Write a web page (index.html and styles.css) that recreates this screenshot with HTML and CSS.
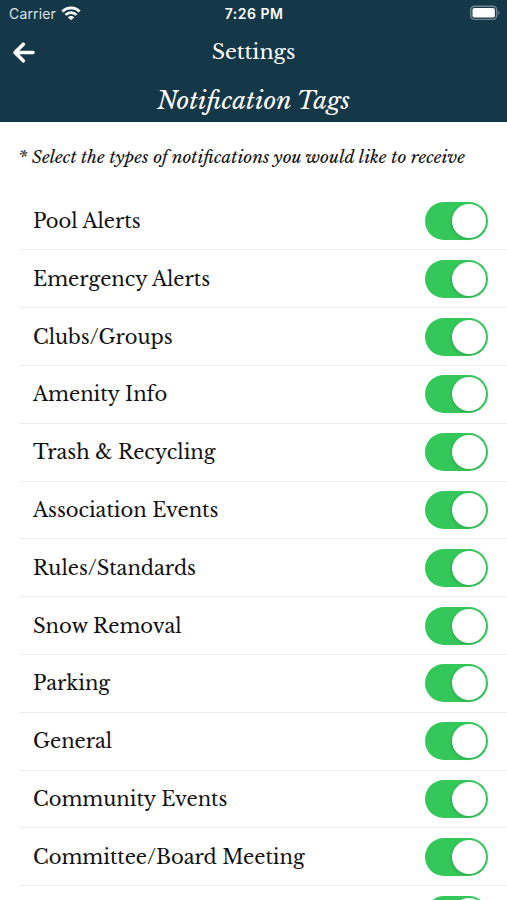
FILE: index.html
```html
<!DOCTYPE html>
<html lang="en">
<head>
<meta charset="utf-8">
<title>Settings</title>
<link rel="stylesheet" href="styles.css">
</head>
<body>
<header class="header">
  <div class="status">
    <div class="carrier"><span>Carrier</span>
      <svg class="wifi" width="20" height="15" viewBox="0 0 20 15" fill="none" stroke="#fff" stroke-width="2.7"><path d="M1.3 5.4C6.2.8 13.8.8 18.700 5.400M4.500 8.900C7.600 5.900 12.400 5.900 15.500 8.900"/><path d="M10 14.300L6.900 11.200C8.700 9.600 11.300 9.600 13.100 11.200Z" fill="#fff" stroke="none"/></svg>
    </div>
    <time class="clock">7:26 PM</time>
    <svg class="battery" width="32" height="16" viewBox="0 0 32 16"><rect x="1.700" y="1.200" width="26" height="13.200" rx="3.800" fill="none" stroke="#70858f" stroke-width="1.400"/><rect x="3.500" y="3" width="22.400" height="9.600" rx="1.800" fill="#fff"/><path d="M29.300 5.500Q32 7.800 29.300 10.100Z" fill="#70858f"/></svg>
  </div>
  <nav class="nav">
    <svg class="back" width="24" height="24" viewBox="0 0 24 24" fill="none" stroke="#fff" stroke-width="3.600" stroke-linecap="round" stroke-linejoin="round"><path d="M12.300 4.200L4 12.500L12.300 20.800M4.500 12.500H22"/></svg>
    <h1 class="title">Settings</h1>
  </nav>
  <h2 class="subtitle">Notification Tags</h2>
</header>
<main>
  <p class="hint">* Select the types of notifications you would like to receive</p>
  <ul class="tags">
    <li class="tag"><span>Pool Alerts</span><i class="toggle"></i></li>
    <li class="tag"><span>Emergency Alerts</span><i class="toggle"></i></li>
    <li class="tag"><span>Clubs/Groups</span><i class="toggle"></i></li>
    <li class="tag"><span>Amenity Info</span><i class="toggle"></i></li>
    <li class="tag"><span>Trash &amp; Recycling</span><i class="toggle"></i></li>
    <li class="tag"><span>Association Events</span><i class="toggle"></i></li>
    <li class="tag"><span>Rules/Standards</span><i class="toggle"></i></li>
    <li class="tag"><span>Snow Removal</span><i class="toggle"></i></li>
    <li class="tag"><span>Parking</span><i class="toggle"></i></li>
    <li class="tag"><span>General</span><i class="toggle"></i></li>
    <li class="tag"><span>Community Events</span><i class="toggle"></i></li>
    <li class="tag"><span>Committee/Board Meeting</span><i class="toggle"></i></li>
    <li class="tag"><span></span><i class="toggle"></i></li>
  </ul>
</main>
</body>
</html>
```
FILE: styles.css
```css
* { box-sizing: border-box; }
html, body { height: 100%; }
body {
  margin: 0;
  overflow: hidden;
  background: #fff;
  color: #111;
  font-family: "Libre Baskerville", "Liberation Serif", serif;
}
.header { height: 122px; background: #153848; color: #fff; }
.status {
  display: grid;
  grid-template-columns: 1fr auto 1fr;
  align-items: center;
  height: 27px;
  padding: 0 6px 0 9px;
  font-family: Inter, "Liberation Sans", sans-serif;
}
.carrier { display: flex; align-items: center; gap: 5px; font-size: 14px; letter-spacing: 0.15px; color: #dce3e6; }
.wifi { margin-top: -1px; }
.clock { font-size: 14px; font-weight: 600; letter-spacing: 0.5px; margin-right: 2px; }
.battery { justify-self: end; margin-top: -1px; }
.nav { display: grid; grid-template-columns: 40px 1fr 40px; align-items: center; height: 50px; padding: 0 11px; }
.title { margin: 0; text-align: center; font-size: 20.6px; font-weight: 400; line-height: 28px; }
.subtitle { margin: 0; text-align: center; font-size: 24.4px; font-style: italic; font-weight: 400; line-height: 47px; }
.hint { margin: 0; height: 70.6px; padding: 0 0 0 18px; line-height: 70px; font-size: 17.1px; font-style: italic; white-space: nowrap; }
.tags { margin: 0 0 0 20px; padding: 0; list-style: none; }
.tag {
  display: flex;
  align-items: center;
  justify-content: space-between;
  height: 57.8px;
  padding: 0 19px 0 13px;
  border-bottom: 1px solid #ececec;
  font-size: 19.5px;
  white-space: nowrap;
}
.toggle {
  display: flex;
  align-items: center;
  justify-content: flex-end;
  width: 63px;
  height: 38px;
  padding-right: 2px;
  border-radius: 19px;
  background: #34c759;
}
.toggle::before {
  content: "";
  width: 34px;
  height: 34px;
  border-radius: 50%;
  background: #fff;
  box-shadow: -1px 1px 3px rgba(0, 0, 0, 0.14);
}
```
